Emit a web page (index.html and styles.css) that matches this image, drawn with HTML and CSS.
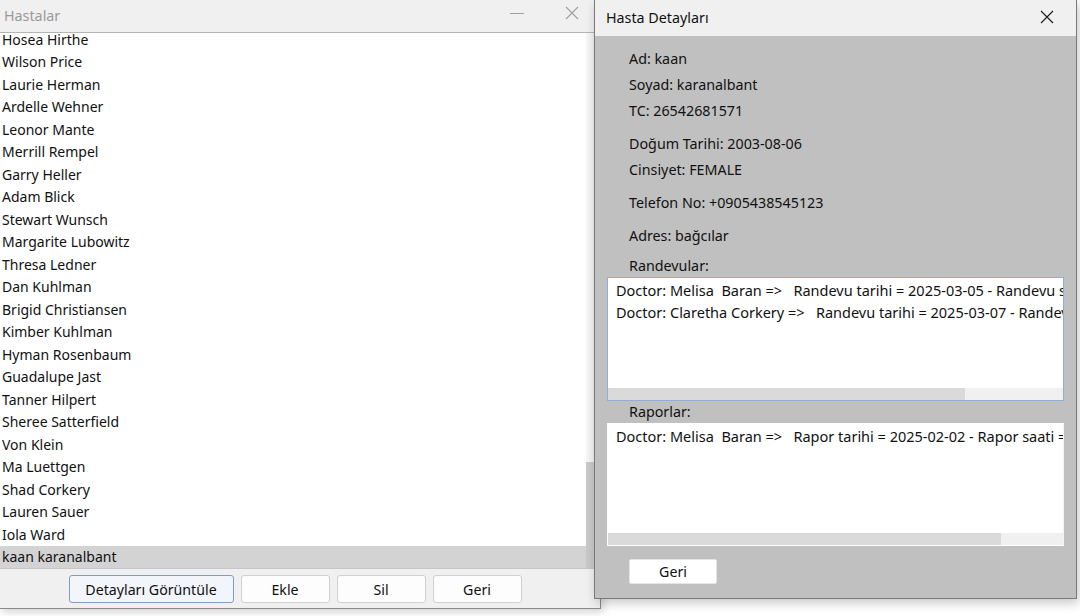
FILE: index.html
```html
<!DOCTYPE html>
<html lang="tr">
<head>
<meta charset="utf-8">
<title>Hastalar</title>
<link rel="stylesheet" href="styles.css">
</head>
<body>
<div class="desktop">
  <div class="win win-list">
    <div class="titlebar tb-inactive">
      <span class="title">Hastalar</span>
      <div class="controls">
        <svg class="ctl ctl-min" width="16" height="16" viewBox="0 0 16 16"><path d="M1 8.5H15" stroke="#a0a0a0" stroke-width="1"/></svg>
        <svg class="ctl ctl-close" width="16" height="16" viewBox="0 0 16 16"><path d="M2 2L14 14M14 2L2 14" stroke="#a0a0a0" stroke-width="1.1"/></svg>
      </div>
    </div>
    <div class="list-area">
      <div class="list">
        <div class="rows">
          <div class="row">Hosea Hirthe</div>
          <div class="row">Wilson Price</div>
          <div class="row">Laurie Herman</div>
          <div class="row">Ardelle Wehner</div>
          <div class="row">Leonor Mante</div>
          <div class="row">Merrill Rempel</div>
          <div class="row">Garry Heller</div>
          <div class="row">Adam Blick</div>
          <div class="row">Stewart Wunsch</div>
          <div class="row">Margarite Lubowitz</div>
          <div class="row">Thresa Ledner</div>
          <div class="row">Dan Kuhlman</div>
          <div class="row">Brigid Christiansen</div>
          <div class="row">Kimber Kuhlman</div>
          <div class="row">Hyman Rosenbaum</div>
          <div class="row">Guadalupe Jast</div>
          <div class="row">Tanner Hilpert</div>
          <div class="row">Sheree Satterfield</div>
          <div class="row">Von Klein</div>
          <div class="row">Ma Luettgen</div>
          <div class="row">Shad Corkery</div>
          <div class="row">Lauren Sauer</div>
          <div class="row">Iola Ward</div>
          <div class="row row-selected">kaan karanalbant</div>
        </div>
      </div>
      <div class="vscroll"><div class="vthumb"></div></div>
    </div>
    <div class="btnbar">
      <button class="btn btn-default btn-wide">Detayları Görüntüle</button>
      <button class="btn">Ekle</button>
      <button class="btn">Sil</button>
      <button class="btn">Geri</button>
    </div>
  </div>

  <div class="win win-detail">
    <div class="titlebar tb-active">
      <span class="title">Hasta Detayları</span>
      <svg class="ctl-close-active" width="16" height="16" viewBox="0 0 16 16"><path d="M2 2L14 14M14 2L2 14" stroke="#1a1a1a" stroke-width="1.1"/></svg>
    </div>
    <div class="detail-body">
      <div class="field">Ad: kaan</div>
      <div class="field">Soyad: karanalbant</div>
      <div class="field">TC: 26542681571</div>
      <div class="field field-gap">Doğum Tarihi: 2003-08-06</div>
      <div class="field">Cinsiyet: FEMALE</div>
      <div class="field field-gap">Telefon No: +0905438545123</div>
      <div class="field field-gap">Adres: bağcılar</div>
      <div class="section-label section-first">Randevular:</div>
      <div class="box box-focused">
        <div class="box-rows">
          <div class="box-row">Doctor: Melisa  Baran =&gt;   Randevu tarihi = 2025-03-05 - Randevu s</div>
          <div class="box-row">Doctor: Claretha Corkery =&gt;   Randevu tarihi = 2025-03-07 - Randev</div>
        </div>
        <div class="hscroll"><div class="hthumb" style="width:357px"></div></div>
      </div>
      <div class="section-label">Raporlar:</div>
      <div class="box box-plain">
        <div class="box-rows">
          <div class="box-row">Doctor: Melisa  Baran =&gt;   Rapor tarihi = 2025-02-02 - Rapor saati =</div>
        </div>
        <div class="hscroll"><div class="hthumb" style="width:393px"></div></div>
      </div>
      <div class="detail-actions">
        <button class="btn btn-white">Geri</button>
      </div>
    </div>
  </div>
</div>
</body>
</html>
```

FILE: styles.css
```css
* { box-sizing: border-box; }
html, body {
  margin: 0;
  padding: 0;
  background: #ffffff;
}
body {
  font-family: "Noto Sans", "Open Sans", sans-serif;
  font-size: 14px;
  color: #111;
}
.desktop {
  position: relative;
  width: 1080px;
  height: 616px;
  overflow: hidden;
  background: #ffffff;
}

/* generic window */
.win {
  position: absolute;
  display: flex;
  flex-direction: column;
  background: #f0f0f0;
}
.win-list {
  left: 0;
  top: 0;
  width: 601px;
  height: 609px;
  border-right: 1px solid #8a8a8a;
  border-bottom: 1px solid #8a8a8a;
  box-shadow: 2px 3px 8px rgba(0,0,0,0.18);
}
.win-detail {
  left: 594px;
  top: 0;
  width: 483px;
  height: 599px;
  border-left: 1px solid #7a7a7a;
  border-right: 1px solid #7a7a7a;
  border-bottom: 1px solid #7a7a7a;
  box-shadow: 2px 4px 10px rgba(0,0,0,0.22);
}

/* title bars */
.titlebar {
  display: flex;
  align-items: center;
  justify-content: space-between;
  flex: none;
  background: #f0f0f0;
}
.tb-inactive {
  height: 33px;
  padding: 0 0 2px 4px;
  border-bottom: 1px solid #b4b4b4;
}
.tb-inactive .title {
  color: #9a9a9a;
  font-size: 14.3px;
}
.controls {
  display: flex;
  align-items: center;
  gap: 39px;
  padding-right: 20px;
}
.ctl-min { margin-top: -5px; }
.ctl-close { margin-top: -5px; }
.tb-active {
  height: 36px;
  padding: 0 21px 2px 11px;
}
.tb-active .title {
  color: #111;
  font-size: 14.3px;
}

/* patient list */
.list-area {
  display: flex;
  height: 535px;
  flex: none;
}
.list {
  width: 586px;
  height: 535px;
  overflow: hidden;
  background: #ffffff;
}
.rows {
  margin-top: -4.5px;
}
.row {
  height: 22.5px;
  line-height: 22.5px;
  padding-left: 2px;
  white-space: nowrap;
  color: #111;
}
.row-selected {
  background: #d3d3d3;
}
.vscroll {
  flex: 1;
  display: flex;
  flex-direction: column;
  justify-content: flex-end;
  background: linear-gradient(90deg, #f7f7f7, #ececec);
}
.vthumb {
  height: 106px;
  width: 8px;
  background: #c9c9c9;
}

/* buttons */
.btnbar {
  flex: 1;
  display: flex;
  justify-content: center;
  align-items: flex-start;
  gap: 7px;
  padding: 6px 10px 0 0;
  border-top: 1px solid #c6c6c6;
  background: #f0f0f0;
}
.btn {
  font-family: inherit;
  font-size: 14.2px;
  color: #111;
  height: 28px;
  width: 89px;
  padding: 0;
  background: #fdfdfd;
  border: 1px solid #d0d0d0;
  border-radius: 3px;
}
.btn-wide { width: 165px; }
.btn-default {
  background: #f2f5f9;
  border-color: #7f9cc4;
}

/* details */
.detail-body {
  flex: 1;
  background: #c0c0c0;
  padding: 10px 12px 0 12px;
  display: flex;
  flex-direction: column;
  font-size: 14.3px;
}
.field {
  height: 26px;
  line-height: 26px;
  padding-left: 22px;
  color: #111;
}
.field-gap { margin-top: 7px; }
.section-label {
  height: 22px;
  line-height: 22px;
  padding-left: 22px;
  color: #111;
}
.section-first { margin-top: 6px; }
.box {
  width: 457px;
  display: flex;
  flex-direction: column;
  background: #ffffff;
}
.box-focused {
  height: 124px;
  border: 1px solid #8fb0d6;
}
.box-plain {
  height: 123px;
  border: 1px solid #ffffff;
  border-right-color: #f4f4f4;
}
.box-rows {
  flex: 1;
  padding-top: 1px;
  overflow: hidden;
}
.box-row {
  height: 22px;
  line-height: 22px;
  padding-left: 8px;
  white-space: pre;
  overflow: hidden;
  font-size: 14.5px;
  color: #111;
}
.hscroll {
  height: 12px;
  flex: none;
  background: #f0f0f0;
}
.hthumb {
  height: 12px;
  background: #dadada;
}
.detail-actions {
  margin-top: 13px;
  padding-left: 22px;
}
.btn-white {
  height: 25px;
  width: 88px;
  background: #ffffff;
  border: 1px solid #e4e4e4;
  border-radius: 2px;
}
```
